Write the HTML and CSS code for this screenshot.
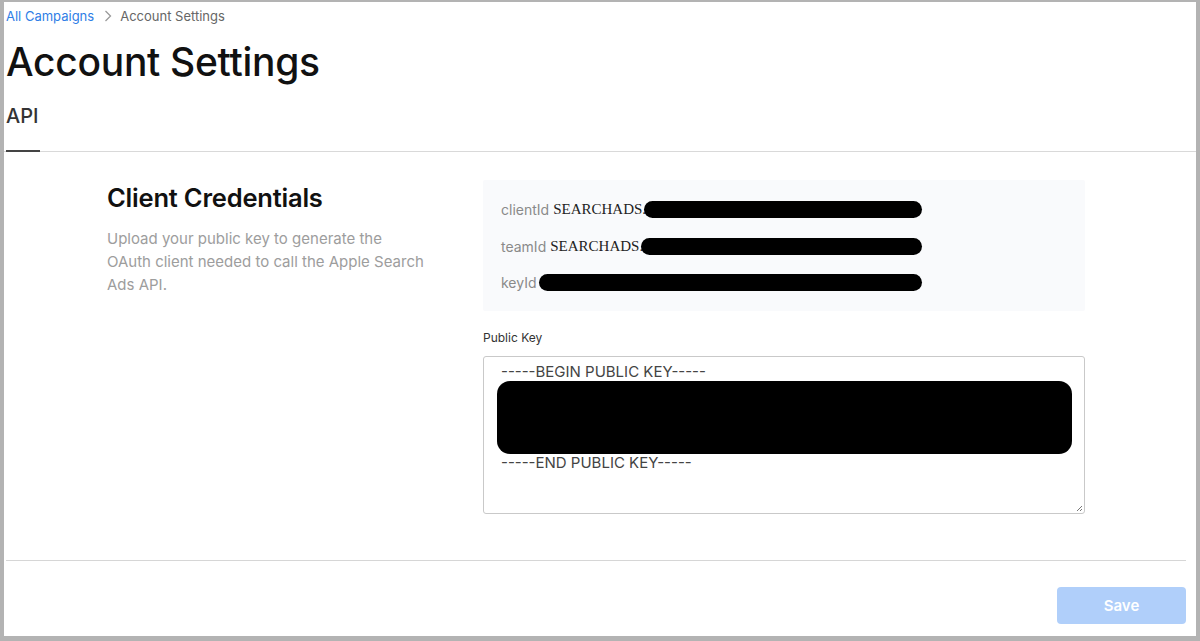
FILE: index.html
```html
<!DOCTYPE html>
<html>
<head>
<meta charset="utf-8">
<link rel="stylesheet" href="styles.css">
</head>
<body>
<div class="window">
  <nav class="crumbs">
    <a class="crumb-link">All Campaigns</a>
    <svg class="chev" width="8" height="12" viewBox="0 0 8 12"><path d="M1.5 1 L6.5 6 L1.5 11" fill="none" stroke="#9a9a9a" stroke-width="1.3"/></svg>
    <span class="crumb-cur">Account Settings</span>
  </nav>
  <h1 class="title">Account Settings</h1>
  <div class="tabs">
    <div class="tab active">API</div>
  </div>
  <section class="panel">
    <div class="intro">
      <h2>Client Credentials</h2>
      <p>Upload your public key to generate the OAuth client needed to call the Apple Search Ads API.</p>
    </div>
    <div class="form">
      <div class="creds">
        <div class="cred"><span class="lbl">clientId</span><span class="val">SEARCHADS.</span><span class="redact"></span></div>
        <div class="cred"><span class="lbl">teamId</span><span class="val">SEARCHADS.</span><span class="redact"></span></div>
        <div class="cred"><span class="lbl">keyId</span><span class="redact"></span></div>
      </div>
      <label class="pk-label">Public Key</label>
      <div class="textarea">
        <div class="pk-line">-----BEGIN PUBLIC KEY-----</div>
        <div class="pk-block"></div>
        <div class="pk-line">-----END PUBLIC KEY-----</div>
        <svg class="grip" width="8" height="8" viewBox="0 0 8 8"><path d="M7 2 L2 7 M7 5 L5 7" stroke="#777" stroke-width="1"/></svg>
      </div>
    </div>
  </section>
  <div class="footer">
    <button class="save" disabled>Save</button>
  </div>
</div>
</body>
</html>
```
FILE: styles.css
```css
html, body {
  margin: 0;
  padding: 0;
  background: #b3b3b3;
}
body {
  font-family: Inter, "Liberation Sans", sans-serif;
  color: #1d1d1f;
}
.window {
  box-sizing: border-box;
  width: 1200px;
  height: 641px;
  border-style: solid;
  border-color: #b3b3b3;
  border-width: 2px 4px 5px 4px;
  background: #fff;
  display: flex;
  flex-direction: column;
}
.crumbs {
  display: flex;
  align-items: center;
  padding: 5px 0 0 2px;
  height: 18px;
  font-size: 13px;
  line-height: 18px;
}
.crumb-link { color: #2f7ee6; }
.chev { margin: 0 8px 0 10px; }
.crumb-cur { color: #666; }
.title {
  margin: 14px 0 0 2px;
  font-size: 39px;
  line-height: 46px;
  font-weight: 500;
  letter-spacing: -0.3px;
  color: #111;
}
.tabs {
  display: flex;
  border-bottom: 1px solid #d9d9d9;
  padding-left: 2px;
  margin-top: 18px;
}
.tab {
  font-size: 20px;
  line-height: 26px;
  font-weight: 500;
  color: #333;
  padding-bottom: 21px;
  border-bottom: 2px solid #444;
  margin-bottom: -1px;
  width: 34px;
}
.panel {
  display: flex;
  padding: 28px 0 0 101px;
  height: 409px;
  border-bottom: 1px solid #d6d6d6;
  margin: 0 10px 0 2px;
  box-sizing: border-box;
}
.intro { width: 376px; }
.intro h2 {
  margin: 3px 0 0;
  font-size: 25.5px;
  line-height: 30px;
  font-weight: 600;
  color: #111;
  letter-spacing: -0.2px;
}
.intro p {
  margin: 14px 0 0;
  font-size: 15px;
  line-height: 23px;
  color: #9d9d9d;
  width: 318px;
}
.form { width: 602px; }
.creds {
  background: #f9fafc;
  height: 131px;
  box-sizing: border-box;
  padding: 21px 163px 0 18px;
  border-radius: 2px;
}
.cred {
  display: flex;
  align-items: center;
  height: 17px;
  margin-bottom: 19.5px;
  font-size: 14px;
}
.lbl { color: #8a8a8a; margin-right: 4px; }
.val {
  font-family: "Liberation Serif", serif;
  color: #222;
  font-size: 15px;
}
.redact {
  display: block;
  flex: 1;
  height: 17px;
  background: #000;
  border-radius: 9px;
  margin-left: -2px;
}
.pk-label {
  display: block;
  margin-top: 19px;
  font-size: 12px;
  line-height: 16px;
  color: #333;
}
.textarea {
  position: relative;
  margin-top: 10px;
  height: 158px;
  box-sizing: border-box;
  border: 1px solid #c9c9c9;
  border-radius: 3px;
  padding: 6px 12px 0 13px;
}
.pk-line {
  font-size: 15px;
  line-height: 18px;
  color: #444;
  padding-left: 4px;
}
.pk-block {
  height: 73px;
  background: #000;
  border-radius: 13px;
}
.grip {
  position: absolute;
  right: 1px;
  bottom: 1px;
}
.footer {
  display: flex;
  justify-content: flex-end;
  padding: 26px 10px 0 0;
}
.save {
  width: 129px;
  height: 37px;
  border: none;
  border-radius: 4px;
  background: #b0cffa;
  color: #fff;
  font-family: Inter, "Liberation Sans", sans-serif;
  font-size: 15px;
  font-weight: 600;
}
```
